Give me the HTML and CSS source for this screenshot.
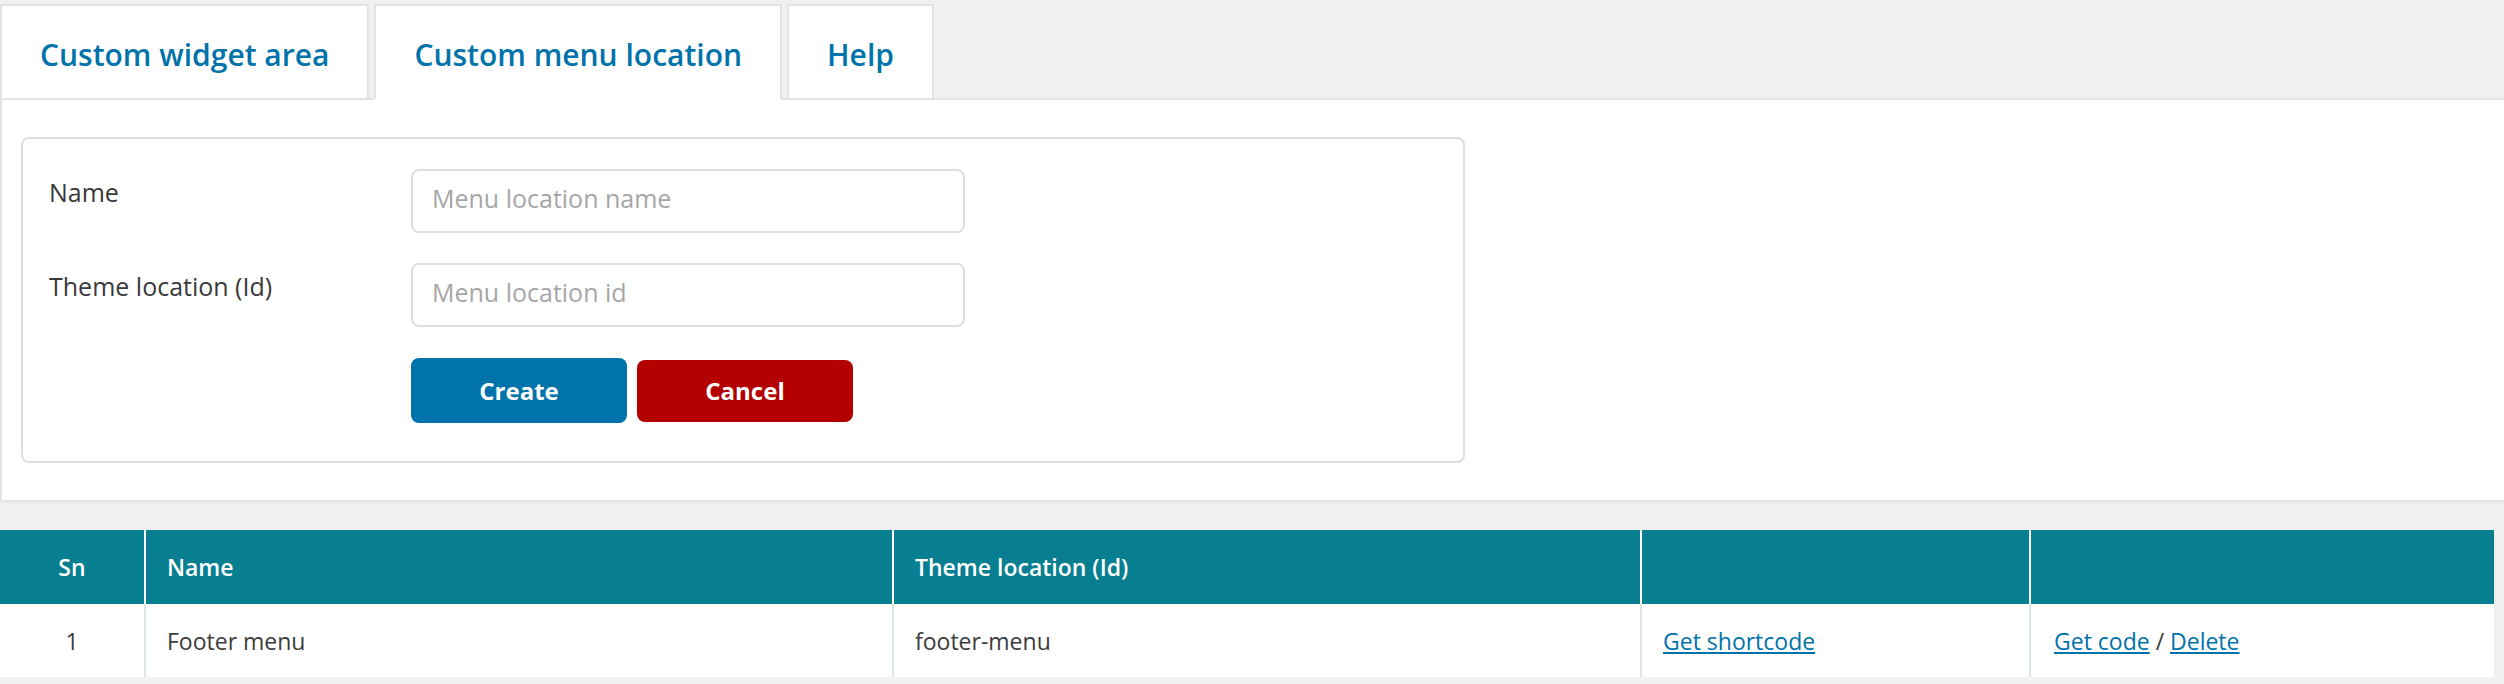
FILE: index.html
```html
<!DOCTYPE html>
<html lang="en">
<head>
<meta charset="utf-8">
<title>Custom menu location</title>
<link rel="stylesheet" href="styles.css">
</head>
<body>
<div class="wrap">
  <nav class="tabs">
    <a class="tab" href="#">Custom widget area</a>
    <a class="tab tab-active" href="#">Custom menu location</a>
    <a class="tab" href="#">Help</a>
  </nav>
  <section class="panel">
    <form class="form-box">
      <label class="form-label" for="loc-name">Name</label>
      <input class="form-input" id="loc-name" type="text" placeholder="Menu location name">
      <label class="form-label" for="loc-id">Theme location (Id)</label>
      <input class="form-input" id="loc-id" type="text" placeholder="Menu location id">
      <div class="form-actions">
        <button type="button" class="btn btn-create">Create</button>
        <button type="button" class="btn btn-cancel">Cancel</button>
      </div>
    </form>
  </section>
  <table class="list">
    <thead>
      <tr>
        <th class="col-sn">Sn</th>
        <th class="col-name">Name</th>
        <th class="col-id">Theme location (Id)</th>
        <th class="col-short"></th>
        <th class="col-act"></th>
      </tr>
    </thead>
    <tbody>
      <tr>
        <td class="col-sn">1</td>
        <td>Footer menu</td>
        <td>footer-menu</td>
        <td><a class="link" href="#">Get shortcode</a></td>
        <td class="col-act-cell"><a class="link" href="#">Get code</a> / <a class="link" href="#">Delete</a></td>
      </tr>
    </tbody>
  </table>
</div>
</body>
</html>
```
FILE: styles.css
```css
html, body {
  margin: 0;
  padding: 0;
  background: #f1f1f1;
}

body {
  font-family: "Open Sans", "Liberation Sans", sans-serif;
  color: #3c3c3c;
}

.wrap {
  padding-top: 4px;
}

/* Tabs */
.tabs {
  display: flex;
  gap: 5px;
  margin-bottom: -2px;
}

.tab {
  position: relative;
  z-index: 1;
  display: block;
  background: #fff;
  border: 2px solid #e3e3e3;
  padding: 28px 38px 22px;
  font-size: 30px;
  font-weight: 600;
  line-height: 42px;
  color: #0073aa;
  text-decoration: none;
}

.tab-active {
  border-bottom-color: #fff;
}

/* Panel */
.panel {
  background: #fff;
  border-top: 2px solid #e3e3e3;
  border-left: 2px solid #e3e3e3;
  padding: 37px 19px 37px;
  box-shadow: 0 2px 3px rgba(0, 0, 0, 0.06);
}

.form-box {
  box-sizing: border-box;
  width: 1444px;
  border: 2px solid #dfdfdf;
  border-radius: 8px;
  padding: 30px 0 38px 26px;
  display: grid;
  grid-template-columns: 362px 554px;
  row-gap: 30px;
}

.form-label {
  font-size: 25px;
  line-height: 34px;
  padding-top: 6px;
  color: #3a3a3a;
}

.form-input {
  box-sizing: border-box;
  width: 554px;
  height: 64px;
  margin: 0;
  border: 2px solid #dedede;
  border-radius: 8px;
  padding: 10px 19px 16px;
  font-family: inherit;
  font-size: 25px;
  line-height: 34px;
  color: #333;
  background: #fff;
  outline: none;
}

.form-input::placeholder {
  color: #a6a6a6;
}

.form-actions {
  grid-column: 2;
  display: flex;
  align-items: center;
  gap: 10px;
  margin-top: 1px;
}

.btn {
  box-sizing: border-box;
  width: 216px;
  border: 0;
  border-radius: 8px;
  padding: 0;
  font-family: inherit;
  font-size: 24px;
  font-weight: 700;
  color: #fff;
  cursor: pointer;
}

.btn-create {
  height: 65px;
  background: #0073aa;
}

.btn-cancel {
  height: 62px;
  background: #b40000;
}

/* Table */
.list {
  width: 2494px;
  margin-top: 30px;
  border-collapse: collapse;
  table-layout: fixed;
  background: #fff;
  box-shadow: 0 2px 3px rgba(0, 0, 0, 0.05);
  font-size: 23px;
}

.list th,
.list td {
  box-sizing: border-box;
  text-align: left;
  padding: 0 0 0 21px;
  border-left: 2px solid #dde4e7;
}

.list th {
  height: 74px;
  background: #077f91;
  color: #fff;
  font-weight: 600;
  border-left-color: #fff;
}

.list td {
  height: 73px;
  color: #3c3c3c;
}

.list th:first-child,
.list td:first-child {
  border-left: 0;
}

.list .col-sn {
  width: 145px;
  padding: 0;
  text-align: center;
}

.list .col-name { width: 748px; }
.list .col-id { width: 748px; }
.list .col-short { width: 389px; }
.list .col-act { width: 464px; }

.list .col-act-cell {
  padding-left: 23px;
}

.link {
  color: #0073aa;
  text-decoration: underline;
}
```
